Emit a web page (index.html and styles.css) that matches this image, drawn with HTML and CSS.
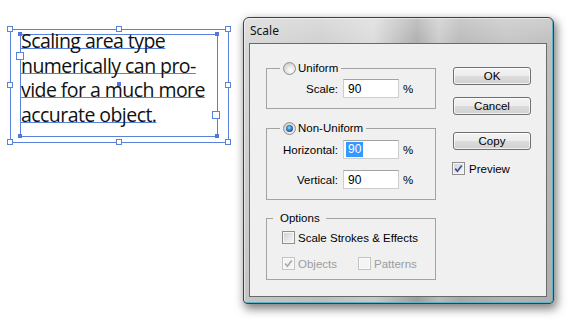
FILE: index.html
```html
<!DOCTYPE html>
<html>
<head>
<meta charset="utf-8">
<link rel="stylesheet" href="styles.css">
</head>
<body>
<div class="page">
  <div class="artboard">
    <div class="bbox">
      <div class="frame">
        <p class="type"><span class="ln">Scaling area type</span><br><span class="ln">numerically can pro-</span><br><span class="ln">vide for a much more</span><br><span class="ln">accurate object.</span></p>
        <span class="dot d-tl"></span><span class="dot d-tr"></span><span class="dot d-bl"></span><span class="dot d-br"></span>
        <span class="dot d-c"></span>
        <span class="port p-in"></span><span class="port p-out"></span>
      </div>
      <span class="h h-tl"></span><span class="h h-tc"></span><span class="h h-tr"></span>
      <span class="h h-ml"></span><span class="h h-mr"></span>
      <span class="h h-bl"></span><span class="h h-bc"></span><span class="h h-br"></span>
    </div>
  </div>

  <div class="window">
    <div class="titlebar">Scale</div>
    <div class="client">
      <div class="left-col">
        <fieldset class="group g-uni">
          <legend class="lg-radio"><span class="radio"></span><span>Uniform</span></legend>
          <div class="row"><span class="lbl">Scale:</span><span class="field">90</span><span class="pct">%</span></div>
        </fieldset>
        <fieldset class="group g-non">
          <legend class="lg-radio"><span class="radio on"></span><span>Non-Uniform</span></legend>
          <div class="row"><span class="lbl">Horizontal:</span><span class="field"><span class="sel">90</span></span><span class="pct">%</span></div>
          <div class="row row2"><span class="lbl">Vertical:</span><span class="field">90</span><span class="pct">%</span></div>
        </fieldset>
        <fieldset class="group g-opt">
          <legend class="lg-text">Options</legend>
          <div class="crow"><span class="check"></span><span>Scale Strokes &amp; Effects</span></div>
          <div class="crow crow2">
            <span class="citem off"><span class="check dis"><svg viewBox="0 0 11 11" width="11" height="11"><path d="M2.2 5.6 L4.4 8.2 L8.8 2.4" fill="none" stroke="#a9a9a9" stroke-width="1.6"/></svg></span><span>Objects</span></span>
            <span class="citem off pat"><span class="check dis"></span><span>Patterns</span></span>
          </div>
        </fieldset>
      </div>
      <div class="right-col">
        <div class="btn">OK</div>
        <div class="btn b-cancel">Cancel</div>
        <div class="btn b-copy">Copy</div>
        <div class="crow prev"><span class="check"><svg viewBox="0 0 11 11" width="11" height="11"><path d="M2.2 5.6 L4.4 8.2 L8.8 2.4" fill="none" stroke="#3a4c9e" stroke-width="1.7"/></svg></span><span>Preview</span></div>
      </div>
    </div>
  </div>
</div>
</body>
</html>
```

FILE: styles.css
```css
html, body {
  margin: 0;
  padding: 0;
  background: #ffffff;
}
body {
  width: 568px;
  height: 321px;
  overflow: hidden;
}
.page {
  display: flex;
  align-items: flex-start;
}

/* ---------- artboard / text frame ---------- */
.artboard {
  margin: 29px 0 0 10px;
}
.bbox {
  position: relative;
  width: 219px;
  height: 114px;
  box-sizing: border-box;
  border: 1px solid #5a82dc;
}
.frame {
  position: relative;
  margin: 4px 0 0 9px;
  width: 198px;
  height: 103px;
  box-sizing: border-box;
  border: 1px solid #5a82dc;
}
.type {
  margin: -6px 0 0 0;
  font-family: "Open Sans", "Noto Sans", sans-serif;
  font-size: 19.5px;
  letter-spacing: -0.55px;
  line-height: 24.5px;
  color: #111111;
  white-space: nowrap;
}
.ln {
  text-decoration: underline;
  text-decoration-color: #5a82dc;
  text-decoration-thickness: 1px;
  text-underline-offset: 0;
  text-decoration-skip-ink: none;
}
.h {
  position: absolute;
  width: 6px;
  height: 6px;
  box-sizing: border-box;
  border: 1px solid #5a82dc;
  background: #ffffff;
}
.h-tl { left: -4px; top: -4px; }
.h-tc { left: 105px; top: -4px; }
.h-tr { left: 214px; top: -4px; }
.h-ml { left: -4px; top: 52px; }
.h-mr { left: 214px; top: 52px; }
.h-bl { left: -4px; top: 109px; }
.h-bc { left: 105px; top: 109px; }
.h-br { left: 214px; top: 109px; }
.dot {
  position: absolute;
  width: 4px;
  height: 4px;
  background: #4f78da;
}
.d-tl { left: -3px; top: -3px; }
.d-tr { left: 194px; top: -3px; }
.d-bl { left: -3px; top: 99px; }
.d-br { left: 194px; top: 99px; }
.d-c { left: 96px; top: 47px; }
.port {
  position: absolute;
  width: 8px;
  height: 8px;
  box-sizing: border-box;
  border: 1px solid #5a82dc;
  background: #ffffff;
}
.p-in { left: -5px; top: 17px; }
.p-out { left: 191px; top: 76px; }

/* ---------- dialog window ---------- */
.window {
  margin: 17px 0 0 14px;
  width: 311px;
  height: 287px;
  box-sizing: border-box;
  padding: 0 6px 6px 5px;
  border: 1px solid #3f3f3f;
  border-radius: 6px 6px 4px 4px;
  background:
    linear-gradient(180deg, rgba(255,255,255,0.28) 0, rgba(255,255,255,0.05) 26px, rgba(0,0,0,0) 60px, rgba(0,0,0,0.08) 100%),
    linear-gradient(90deg, #d6d6d6 0%, #cecece 25%, #dadada 42%, #aaaaaa 56%, #c9c9c9 63%, #b6b6b6 70%, #c2c2c2 85%, #bcbcbc 100%);
  box-shadow: inset -1px -1px 0 #5fb3c8, inset 1px 1px 0 rgba(255,255,255,0.5), 2px 4px 10px 1px rgba(0,0,0,0.5);
}
.titlebar {
  height: 25px;
  line-height: 25px;
  padding-left: 1px;
  font-family: "Noto Sans", "Open Sans", sans-serif;
  font-size: 12px;
  color: #111111;
}
.client {
  display: flex;
  align-items: flex-start;
  width: 298px;
  height: 254px;
  box-sizing: border-box;
  border: 1px solid #6a6a6a;
  background: #f0f0f0;
  padding: 17px 0 0 16px;
  font-family: "Liberation Sans", Arial, sans-serif;
  font-size: 11.5px;
  color: #000000;
}
.left-col {
  display: flex;
  flex-direction: column;
  width: 170px;
}
.group {
  margin: 0;
  padding: 0;
  border: 1px solid #a3a3a3;
  min-inline-size: 0;
  box-sizing: border-box;
  width: 170px;
}
.group legend {
  height: 14px;
  line-height: 14px;
  padding: 0;
}
.lg-radio {
  display: flex;
  align-items: center;
  gap: 2px;
  margin-left: 13px;
  padding: 0 3px 0 3px !important;
}
.lg-text {
  margin-left: -9px;
  padding: 0 6px 0 7px !important;
}
.g-uni { padding: 4px 0 10px 0; }
.g-non { margin-top: 12px; padding: 5px 0 10px 0; }
.g-opt { margin-top: 11px; padding: 6px 0 9px 15px; }

.row {
  display: flex;
  align-items: center;
  height: 19px;
}
.row2 { margin-top: 11px; }
.lbl {
  width: 71px;
  text-align: right;
  margin-right: 5px;
}
.field {
  display: flex;
  align-items: center;
  width: 56px;
  height: 19px;
  box-sizing: border-box;
  border: 1px solid #cdcdcd;
  border-top-color: #a3a3a3;
  background: #ffffff;
  padding-left: 4px;
  font-size: 12px;
}
.sel {
  background: #3399ff;
  color: #ffffff;
  padding: 1px 2px;
  margin-left: -2px;
  line-height: 13px;
}
.pct {
  margin-left: 4px;
}

.radio {
  display: inline-flex;
  align-items: center;
  justify-content: center;
  width: 13px;
  height: 13px;
  box-sizing: border-box;
  border-radius: 50%;
  border: 1px solid #8e8f8f;
  background: radial-gradient(circle at 60% 65%, #ffffff 0, #e4e4e4 45%, #bdbdbd 100%);
}
.radio.on::after {
  content: "";
  display: block;
  width: 7px;
  height: 7px;
  border-radius: 50%;
  background: radial-gradient(circle at 45% 40%, #9fe0ff 0, #3a8fd0 35%, #174f93 75%, #0d3466 100%);
}

.crow {
  display: flex;
  align-items: center;
  height: 13px;
  gap: 3px;
}
.crow2 {
  margin-top: 13px;
  gap: 0;
}
.citem {
  display: flex;
  align-items: center;
  gap: 3px;
}
.citem.off { color: #9d9d9d; }
.pat { margin-left: 21px; }
.check {
  display: inline-flex;
  align-items: center;
  justify-content: center;
  width: 13px;
  height: 13px;
  box-sizing: border-box;
  border: 1px solid #8e8f8f;
  background: linear-gradient(135deg, #cfcfcf 0%, #e9e9e9 60%, #f7f7f7 100%);
  box-shadow: inset 0 0 0 1px #f6f6f6;
}
.check.dis {
  border-color: #c4c4c4;
  background: #f4f4f4;
  box-shadow: inset 0 0 0 1px #fafafa;
}

.right-col {
  display: flex;
  flex-direction: column;
  margin: 6px 0 0 17px;
}
.btn {
  width: 78px;
  height: 18px;
  box-sizing: border-box;
  border: 1px solid #707070;
  border-radius: 3px;
  background: linear-gradient(180deg, #f3f3f3 0%, #ececec 48%, #dcdcdc 52%, #d0d0d0 100%);
  box-shadow: inset 0 0 0 1px rgba(255,255,255,0.7);
  text-align: center;
  line-height: 16px;
}
.b-cancel { margin-top: 12px; }
.b-copy { margin-top: 17px; }
.prev {
  margin-top: 12px;
  margin-left: -1px;
  gap: 4px;
}
```
